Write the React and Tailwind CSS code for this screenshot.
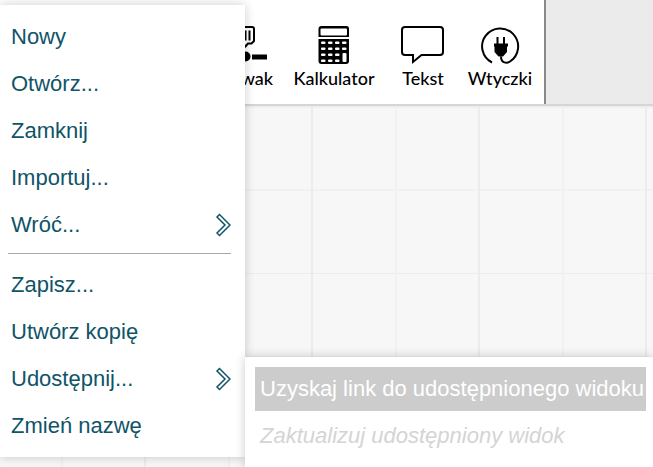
const fileGroups = [
  [
    { label: 'Nowy' },
    { label: 'Otwórz...' },
    { label: 'Zamknij' },
    { label: 'Importuj...' },
    { label: 'Wróć...', submenu: true },
  ],
  [
    { label: 'Zapisz...' },
    { label: 'Utwórz kopię' },
    { label: 'Udostępnij...', submenu: true },
    { label: 'Zmień nazwę' },
  ],
];

function SliderIcon() {
  return (
    <svg className="shrink-0" width="60" height="42" viewBox="0 0 60 42" fill="none" stroke="#000" strokeWidth="2" aria-hidden="true">
      <path d="M20 5q0-2 2-2h13q2 0 2 2v12l-2.500 2.500h-3.500l-2.500 3-2.500-3h-4l-2.500-2.500z" />
      <path d="M24.500 6.500v10M28.500 6.500v10M32.500 6.500v10" />
      <circle cx="28.500" cy="32.500" r="5" fill="#000" stroke="none" />
      <path d="M5 33h16M35 33h15" strokeWidth="5" />
    </svg>
  );
}

function CalculatorIcon() {
  const keys = [];
  for (let row = 0; row < 4; row += 1) {
    for (let col = 0; col < 4; col += 1) {
      if (!(col === 3 && row > 1)) keys.push([col, row]);
    }
  }
  return (
    <svg width="32" height="42" viewBox="0 0 32 42" aria-hidden="true">
      <path d="M3.500 2h25q2.500 0 2.500 3v8H.500V5q0-3 3-3z" fill="#000" />
      <rect x="2.500" y="4.500" width="26.500" height="7" rx="1" fill="#fff" />
      <path d="M.500 15H31v22q0 3-3 3H3.500q-3 0-3-3z" fill="#000" />
      {keys.map(([col, row]) => (
        <rect key={`${col}-${row}`} x={3 + col * 7} y={17.5 + row * 6} width="4.500" height="2.500" rx="1" fill="#fff" />
      ))}
      <rect x="24.500" y="29" width="4" height="9" rx="1" fill="#fff" />
    </svg>
  );
}

function SpeechIcon() {
  return (
    <svg width="44" height="42" viewBox="0 0 44 42" fill="none" stroke="#000" strokeWidth="2" aria-hidden="true">
      <path d="M4 3h35q3 0 3 3v22q0 3-3 3H20.500l-8.500 7V31H4q-3 0-3-3V6q0-3 3-3z" />
    </svg>
  );
}

function PlugIcon() {
  return (
    <svg width="42" height="42" viewBox="0 0 42 42" fill="none" stroke="#000" strokeWidth="2" aria-hidden="true">
      <path d="M13 38.500A18 18 0 1 1 31 37.500c-3 2-9 2-9-5" />
      <path d="M18.500 13v8M25 13v8" />
      <path d="M15 19.500h14v3h-1v5.500l-4 4.500h-4.500l-4-4.500v-5.500H15z" fill="#000" stroke="none" />
    </svg>
  );
}

function Chevron() {
  return (
    <svg width="16" height="24" viewBox="0 0 16 24" fill="none" stroke="#0f5468" strokeWidth="1.500" aria-hidden="true">
      <path d="M2 4 4.500 1.500 15 12 4.500 22.500 2 20 10 12z" />
    </svg>
  );
}

const tools = [
  { label: 'Suwak', Icon: SliderIcon, size: 'w-10' },
  { label: 'Kalkulator', Icon: CalculatorIcon, size: 'w-[90px]' },
  { label: 'Tekst', Icon: SpeechIcon, size: 'w-11' },
  { label: 'Wtyczki', Icon: PlugIcon, size: 'w-[66px]' },
];

function MenuItem({ label, submenu }) {
  return (
    <button type="button" role="menuitem" className="flex h-11 w-full items-center justify-between pr-[6px] pl-[7px] text-left">
      {label}
      {submenu && <Chevron />}
    </button>
  );
}

export default function App() {
  return (
    <div className="relative flex h-screen flex-col overflow-hidden bg-[#f7f7f7] font-['Liberation_Sans',Arial,sans-serif]">
      <header className="flex h-[106px] shrink-0 border-b-2 border-[#d6d6d6] bg-[#ebebeb] shadow-[0_1px_2px_rgba(0,0,0,0.08)]">
        <div className="flex flex-1 items-start justify-end gap-[22px] border-r-2 border-[#88898b] bg-white pt-6 pr-[11px] font-['Lato',sans-serif]">
          {tools.map(({ label, Icon, size }) => (
            <button key={label} type="button" className={`flex flex-col items-center text-lg font-medium leading-6 text-black ${size}`}>
              <Icon />
              {label}
            </button>
          ))}
        </div>
        <div className="w-[107px]" />
      </header>
      <main className="flex-1 bg-[linear-gradient(90deg,#ececec_2px,transparent_2px),linear-gradient(90deg,#f1f1f1_2px,transparent_2px),linear-gradient(#ececec_1px,transparent_1px),linear-gradient(#f1f1f1_2px,transparent_2px)] bg-size-[167px_167px] bg-position-[144px_0,61px_0,0_167px,0_83px]" />

      <nav role="menu" aria-label="Plik" className="absolute top-[5px] left-0 w-[245px] bg-white pt-[10px] pr-2 pb-[6px] pl-1 text-[22px] leading-7 text-[#0f5468] shadow-[0_0_10px_rgba(0,0,0,0.2)]">
        <div className="flex flex-col gap-[3px]">
          {fileGroups[0].map((item) => <MenuItem key={item.label} {...item} />)}
        </div>
        <hr className="mt-[6px] mr-[6px] mb-[9px] ml-1 border-[#a8a8a8]" />
        <div className="flex flex-col gap-[3px] pb-[3px]">
          {fileGroups[1].map((item) => <MenuItem key={item.label} {...item} />)}
        </div>
      </nav>

      <div role="menu" aria-label="Udostępnij" className="absolute top-[357px] right-0 bottom-0 left-[245px] flex flex-col gap-[3px] bg-white py-[10px] pr-[7px] pl-[10px] text-[22px] leading-7 whitespace-nowrap shadow-[0_0_10px_rgba(0,0,0,0.2)]">
        <button type="button" role="menuitem" className="h-11 shrink-0 bg-[#cccccc] px-[5px] text-left text-white">Uzyskaj link do udostępnionego widoku</button>
        <button type="button" role="menuitem" disabled className="h-11 shrink-0 px-[5px] text-left text-[#d4d4d4] italic">Zaktualizuj udostępniony widok</button>
      </div>
    </div>
  );
}
